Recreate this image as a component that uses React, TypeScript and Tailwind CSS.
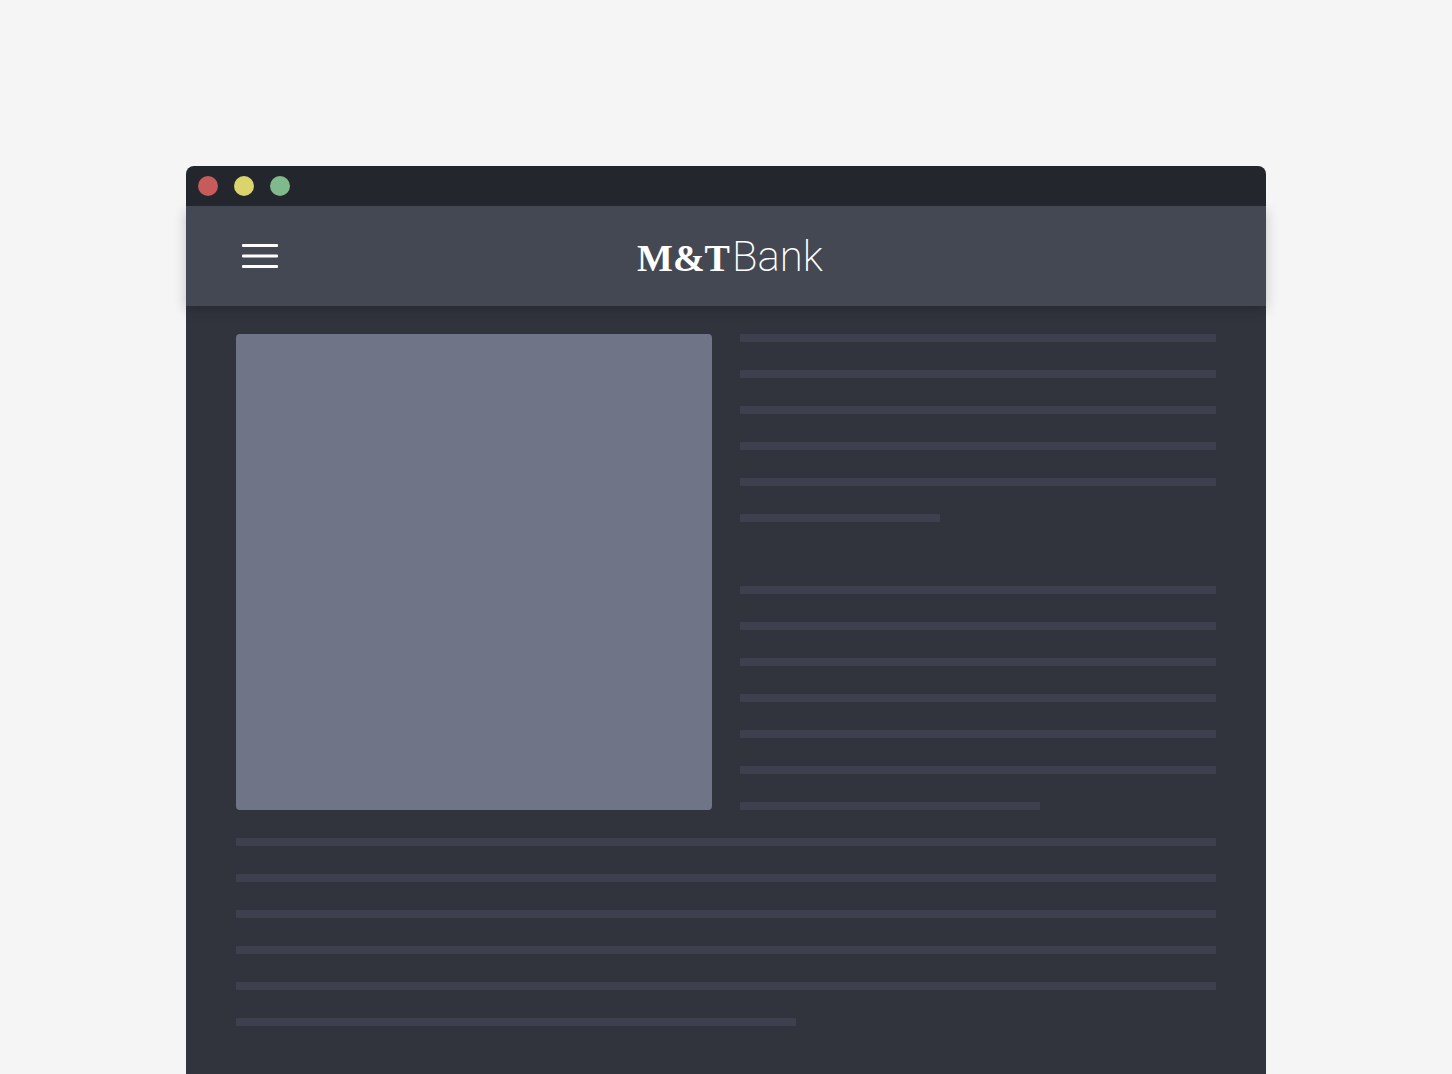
import clsx from "clsx";

// Widths of the placeholder lines, one entry per line. "gap" is a paragraph break.
const ASIDE_LINES = [
  "full", "full", "full", "full", "full", "w-[200px]",
  "gap",
  "full", "full", "full", "full", "full", "full", "w-[300px]",
];
const BODY_LINES = ["full", "full", "full", "full", "full", "w-[560px]"];

function SkeletonLines({ lines }: { lines: string[] }) {
  return (
    <div className="flex flex-col gap-7">
      {lines.map((line, i) => (
        <div
          key={i}
          className={clsx(
            "h-2 max-w-full",
            line !== "gap" && "bg-[#3e414d]",
            line !== "full" && line !== "gap" && line
          )}
        />
      ))}
    </div>
  );
}

function TitleBar() {
  return (
    <div className="relative z-20 flex h-10 items-center gap-4 rounded-t-lg bg-[#23262d] px-3">
      <span className="size-5 rounded-full bg-[#c75b5b]" />
      <span className="size-5 rounded-full bg-[#dbd46c]" />
      <span className="size-5 rounded-full bg-[#80b98b]" />
    </div>
  );
}

function Logo() {
  return (
    <div className="flex items-baseline gap-0.5 pt-0.5 leading-none whitespace-nowrap text-white antialiased">
      <span className="font-['Liberation_Serif',serif] text-[38px] font-bold">M&amp;T</span>
      <span className="font-['Roboto',sans-serif] text-[42px] font-extralight">Bank</span>
    </div>
  );
}

function Header() {
  return (
    <header className="relative z-10 flex h-[100px] items-center bg-[#444852] pr-12 pl-14 shadow-[0_4px_12px_rgba(0,0,0,0.2)]">
      <div className="flex flex-1">
        <button type="button" aria-label="Open menu" className="cursor-pointer">
          <svg width="36" height="24" viewBox="0 0 36 24" fill="#fff">
            <rect width="36" height="3" rx="1" />
            <rect y="10.5" width="36" height="3" rx="1" />
            <rect y="21" width="36" height="3" rx="1" />
          </svg>
        </button>
      </div>
      <Logo />
      <div className="flex-1" />
    </header>
  );
}

export default function App() {
  return (
    <div className="flex min-h-screen flex-col bg-[#f5f5f5] pt-[166px]">
      <div className="mx-auto flex w-full max-w-[1080px] flex-1 flex-col">
        <TitleBar />
        <Header />
        <main className="flex flex-1 flex-col gap-7 bg-[#31343d] px-[50px] pt-7 pb-12">
          <div className="grid grid-cols-2 gap-7">
            <div className="rounded bg-[#6f7487]" />
            <SkeletonLines lines={ASIDE_LINES} />
          </div>
          <SkeletonLines lines={BODY_LINES} />
        </main>
      </div>
    </div>
  );
}
